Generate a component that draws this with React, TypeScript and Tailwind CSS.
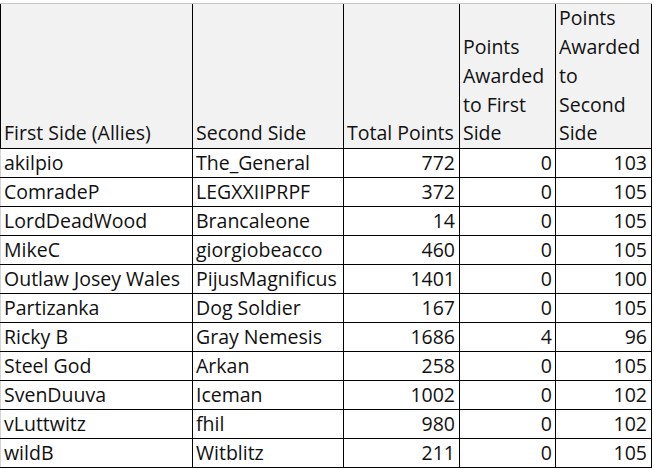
const rows: [string, string, number, number, number][] = [
  ["akilpio", "The_General", 772, 0, 103],
  ["ComradeP", "LEGXXIIPRPF", 372, 0, 105],
  ["LordDeadWood", "Brancaleone", 14, 0, 105],
  ["MikeC", "giorgiobeacco", 460, 0, 105],
  ["Outlaw Josey Wales", "PijusMagnificus", 1401, 0, 100],
  ["Partizanka", "Dog Soldier", 167, 0, 105],
  ["Ricky B", "Gray Nemesis", 1686, 4, 96],
  ["Steel God", "Arkan", 258, 0, 105],
  ["SvenDuuva", "Iceman", 1002, 0, 102],
  ["vLuttwitz", "fhil", 980, 0, 102],
  ["wildB", "Witblitz", 211, 0, 105],
];

function HeaderCell({ w, children, first }: { w: string; children: React.ReactNode; first?: boolean }) {
  return (
    <div
      className={`${w} ${first ? "border-l border-[#d4d4d4]" : ""} border-r border-black flex flex-col justify-end px-[3px] leading-[28.75px] whitespace-nowrap`}
    >
      {children}
    </div>
  );
}

export default function App() {
  return (
    <div className="w-[654px] h-[469px] bg-white pt-[3px] text-[#111] text-[19.5px] font-['Open_Sans',sans-serif]">
      <div className="w-[652px] border-t border-[#c6c6c6]">
        <div className="flex h-[145px] bg-[#f2f2f2] border-b border-black">
          <HeaderCell w="w-[193px]" first>
            <span>First Side (Allies)</span>
          </HeaderCell>
          <HeaderCell w="w-[151px]">
            <span>Second Side</span>
          </HeaderCell>
          <HeaderCell w="w-[116px]">
            <span>Total Points</span>
          </HeaderCell>
          <HeaderCell w="w-[96px]">
            <span>Points</span>
            <span>Awarded</span>
            <span>to First</span>
            <span>Side</span>
          </HeaderCell>
          <HeaderCell w="w-[96px]">
            <span>Points</span>
            <span>Awarded</span>
            <span>to</span>
            <span>Second</span>
            <span>Side</span>
          </HeaderCell>
        </div>
        {rows.map(([a, b, total, p1, p2]) => (
          <div key={a} className="flex h-[29px] border-b border-black leading-[28px]">
            <div className="w-[193px] border-l border-[#d4d4d4] border-r border-r-black px-[3px] whitespace-nowrap">
              {a}
            </div>
            <div className="w-[151px] border-r border-black px-[3px] whitespace-nowrap">{b}</div>
            <div className="w-[116px] border-r border-black px-[4px] text-right">{total}</div>
            <div className="w-[96px] border-r border-black px-[3px] text-right">{p1}</div>
            <div className="w-[96px] border-r border-black px-[4px] text-right">{p2}</div>
          </div>
        ))}
      </div>
    </div>
  );
}
